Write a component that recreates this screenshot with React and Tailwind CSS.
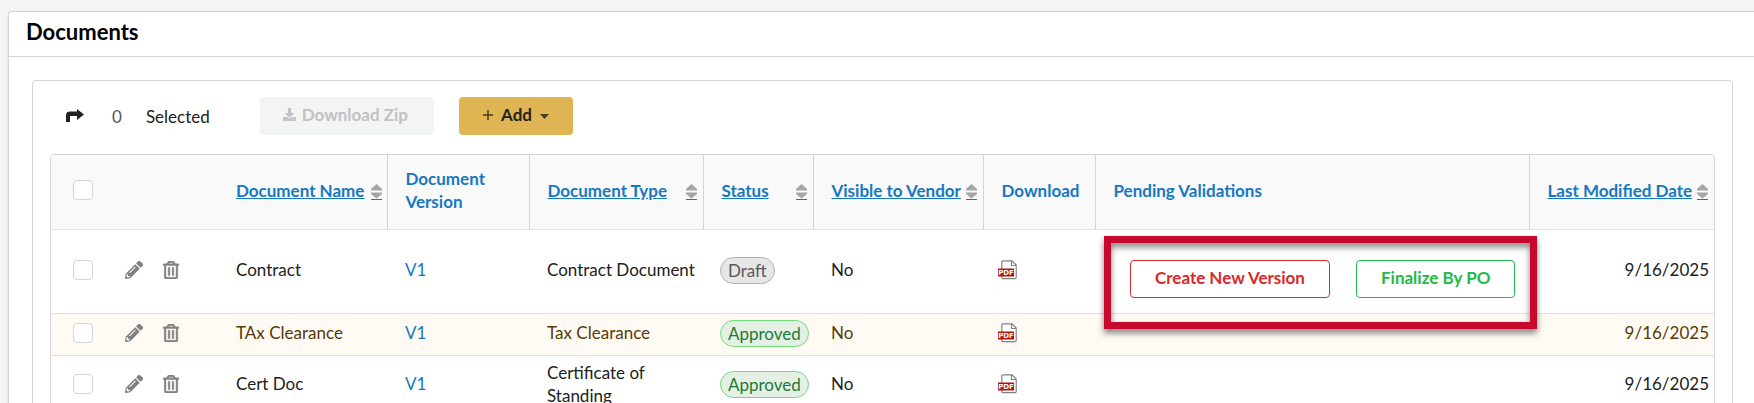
import React from 'react';
import { FaPencilAlt, FaRegTrashAlt, FaDownload } from 'react-icons/fa';

const documents = [
  { id: 1, name: 'Contract', version: 'V1', type: 'Contract Document', status: 'Draft', visible: 'No', modified: '9/16/2025', pending: true },
  { id: 2, name: 'TAx Clearance', version: 'V1', type: 'Tax Clearance', status: 'Approved', visible: 'No', modified: '9/16/2025', highlight: true },
  { id: 3, name: 'Cert Doc', version: 'V1', type: 'Certificate of Standing', status: 'Approved', visible: 'No', modified: '9/16/2025' },
];

const badgeStyles = {
  Draft: 'bg-[#e6e6e6] border-[#b0b0b0] text-[#5a5a5a]',
  Approved: 'bg-[#e3f0e3] border-[#6fdc7c] text-[#1e7a34]',
};

const StatusBadge = ({ status }) => (
  <span className={`block w-fit rounded-full border px-[7px] leading-[25px] ${badgeStyles[status]}`}>
    {status}
  </span>
);

const SortIcon = () => (
  <svg className="shrink-0" width="11" height="20" viewBox="0 -4 11 20" aria-hidden="true">
    <path d="M5.5 0 11 5v1.5H0V5z" fill="#a6a6a6" />
    <path d="M0 8.5h11V10l-5.500 4.500L0 10z" fill="#a6a6a6" />
    <path d="M0 15h11v1H0z" fill="#1678c2" />
  </svg>
);

const PdfIcon = () => (
  <svg width="19" height="20" viewBox="0 0 19 20" aria-hidden="true">
    <path d="M5 .8h9l4.2 4.2v12.500a1.2 1.2 0 0 1-1.2 1.2H5a1.2 1.2 0 0 1-1.2-1.2V2A1.2 1.2 0 0 1 5 .8z" fill="#fff" stroke="#828282" strokeWidth="1.2" />
    <path d="M13.5 1v4.5H18" fill="none" stroke="#828282" strokeWidth="1.2" />
    <path d="M0 8.5h16v8H0z" fill="#b5120b" />
    <text x="8" y="15" textAnchor="middle" fill="#fff" fontSize="7" fontWeight="700" fontFamily="DejaVu Sans, sans-serif">PDF</text>
  </svg>
);

const Checkbox = ({ label }) => (
  <input
    type="checkbox"
    aria-label={label}
    className="block size-5 appearance-none rounded border border-[#d4d4d5] bg-white checked:bg-[#1678c2]"
  />
);

const SortableLabel = ({ children }) => (
  <div className="flex items-center justify-between gap-1">
    <a href="#" className="underline whitespace-nowrap">{children}</a>
    <SortIcon />
  </div>
);

const HeaderCell = ({ children, sortable }) => (
  <th className="border-l border-[#d4d4d5] pb-[3px] pl-[18px] pr-[6px] text-left font-bold">
    {sortable ? <SortableLabel>{children}</SortableLabel> : children}
  </th>
);

const PendingActions = () => (
  <div className="relative ml-[17px] mt-4 flex w-fit gap-[26px] font-bold">
    <button className="h-[38px] rounded border border-[#db2828] bg-white px-6 pb-[3px] text-[#db2828] whitespace-nowrap">
      Create New Version
    </button>
    <button className="h-[38px] rounded border border-[#21ba45] bg-white px-6 pb-[3px] text-[#21ba45] whitespace-nowrap">
      Finalize By PO
    </button>
    <div className="pointer-events-none absolute -top-6 -bottom-[31px] -left-[26px] -right-[22px] z-10 border-[7px] border-[#c8092e] drop-shadow-[0_4px_3px_rgba(0,0,0,0.5)]" />
  </div>
);

const DocumentRow = ({ doc }) => (
  <tr className={`border-t border-[#e0e0e0] ${doc.highlight ? 'h-[42px] bg-[#fffaf3] text-[#573a08]' : doc.pending ? 'h-[84px]' : 'h-[60px]'}`}>
    <td className="pb-[3px] pl-[22px]">
      <Checkbox label={`Select ${doc.name}`} />
    </td>
    <td className="pb-[3px]">
      <div className="flex items-center gap-[19px] text-[#808080]">
        <button aria-label={`Edit ${doc.name}`}><FaPencilAlt size={18} /></button>
        <button aria-label={`Delete ${doc.name}`}>
          <FaRegTrashAlt size={18} stroke="currentColor" strokeWidth={12} />
        </button>
      </div>
    </td>
    <td className="pb-[3px] pl-[11px]">{doc.name}</td>
    <td className="pb-[3px] pl-[18px]"><a href="#" className="text-[#1678c2]">{doc.version}</a></td>
    <td className="pb-[3px] pl-[18px]">{doc.type}</td>
    <td className="pb-px pl-[17px]"><StatusBadge status={doc.status} /></td>
    <td className="pb-[3px] pl-[18px]">{doc.visible}</td>
    <td className="pb-[3px] pl-[15px]">
      <a href="#" aria-label={`Download ${doc.name}`} className="block w-fit"><PdfIcon /></a>
    </td>
    <td className="pl-[18px]">{doc.pending && <PendingActions />}</td>
    <td className="pb-[3px] pr-[5px] text-right">{doc.modified}</td>
  </tr>
);

export default function App() {
  return (
    <div className="min-h-screen overflow-x-clip bg-[#f5f5f5] pl-2 pt-[11px] font-[Lato,sans-serif] text-[17px] leading-[23px] text-[#212121]">
      <section className="min-h-screen rounded-tl border-l border-t border-[#d4d4d5] bg-white shadow-sm">
        <header className="flex h-[45px] items-center border-b border-[#d4d4d5] px-[17px] pb-[5px]">
          <h1 className="text-[22px] font-bold text-black">Documents</h1>
        </header>
        <div className="ml-[23px] mr-[21px] mt-[23px] rounded border border-[#d4d4d5] px-[17px] pb-4">
          <div className="flex h-[73px] items-center pb-[3px]">
            <button aria-label="Share" className="ml-4">
              <svg width="18" height="14" viewBox="0 0 18 14" fill="currentColor">
                <path d="M0 13V6.500A4 4 0 0 1 4 2.500h7V0l7 5.500-7 5.500V7H4v6z" />
              </svg>
            </button>
            <span className="ml-7 text-[#555]">0</span>
            <span className="ml-6">Selected</span>
            <button disabled className="ml-[50px] flex h-[38px] items-center gap-[6px] rounded bg-[#f3f5f5] pb-[3px] pl-[23px] pr-[26px] font-bold text-[#c0c2c2]">
              <FaDownload size={13} /> Download Zip
            </button>
            <button className="ml-[25px] flex h-[38px] items-center gap-2 rounded bg-[#deb552] px-6 pb-[3px] font-bold">
              <svg width="10" height="10" viewBox="0 0 10 10" stroke="#4a3f25" strokeWidth="1.5"><path d="M5 0v10M0 5h10" /></svg>
              Add
              <svg width="9" height="9" viewBox="0 0 9 9" fill="#4a3f25"><path d="M0 4h9L4.500 9z" /></svg>
            </button>
          </div>
          <div className="overflow-clip rounded border border-[#d4d4d5]">
            <table className="w-full table-fixed border-collapse">
              <colgroup>
                <col className="w-[74px]" />
                <col className="w-[100px]" />
                <col className="w-[162px]" />
                <col className="w-[142px]" />
                <col className="w-[174px]" />
                <col className="w-[110px]" />
                <col className="w-[170px]" />
                <col className="w-[112px]" />
                <col />
                <col className="w-[185px]" />
              </colgroup>
              <thead>
                <tr className="h-[74px] bg-[#f9f9f9] text-[#1678c2]">
                  <th className="pb-[3px] pl-[22px]"><Checkbox label="Select all" /></th>
                  <th></th>
                  <th className="pb-[3px] pl-[11px] pr-[5px] text-left">
                    <SortableLabel>Document Name</SortableLabel>
                  </th>
                  <HeaderCell>Document Version</HeaderCell>
                  <HeaderCell sortable>Document Type</HeaderCell>
                  <HeaderCell sortable>Status</HeaderCell>
                  <HeaderCell sortable>Visible to Vendor</HeaderCell>
                  <HeaderCell>Download</HeaderCell>
                  <HeaderCell>Pending Validations</HeaderCell>
                  <HeaderCell sortable>Last Modified Date</HeaderCell>
                </tr>
              </thead>
              <tbody>
                {documents.map((doc) => (
                  <DocumentRow key={doc.id} doc={doc} />
                ))}
              </tbody>
            </table>
          </div>
        </div>
      </section>
    </div>
  );
}
